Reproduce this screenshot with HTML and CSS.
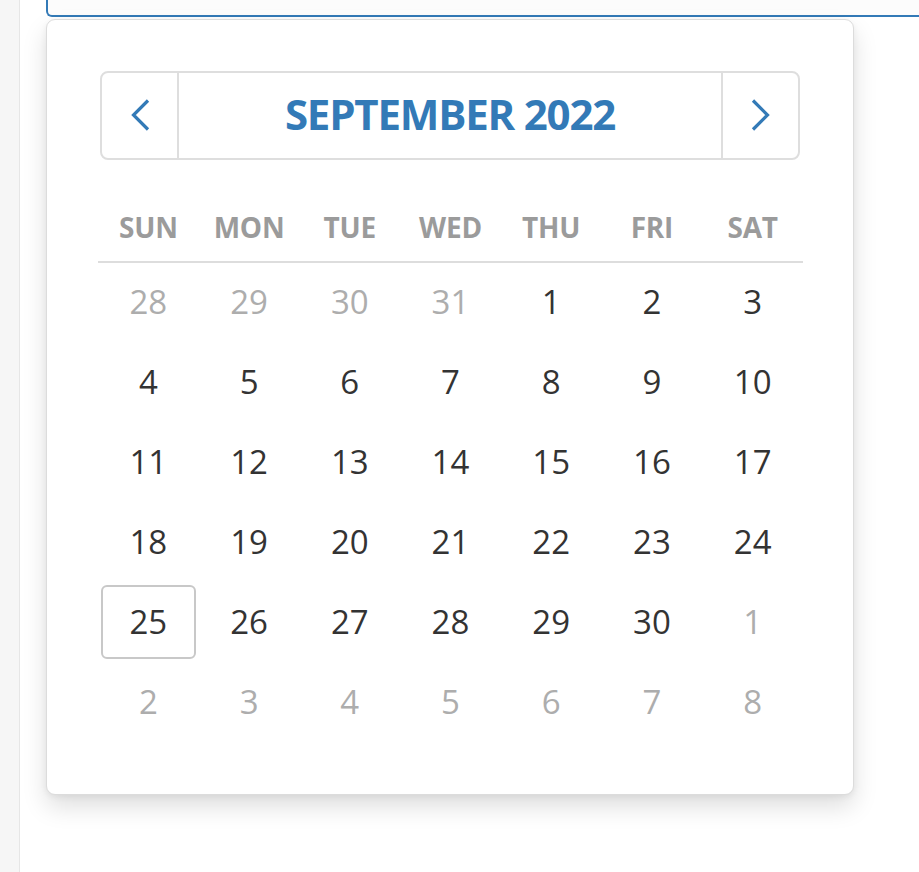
FILE: index.html
```html
<!DOCTYPE html>
<html lang="en">
<head>
<meta charset="utf-8">
<title>Date picker</title>
<link rel="stylesheet" href="styles.css">
</head>
<body>
<div class="page">
  <aside class="sidebar"></aside>
  <main class="main">
    <div class="field"></div>
    <div class="picker">
      <div class="picker-head">
        <button class="nav nav-prev" aria-label="Previous month">
          <svg width="20" height="32" viewBox="0 0 20 32"><path d="M18 1.5 L3.5 16 L18 30.5" fill="none" stroke="#337ab7" stroke-width="3.2"/></svg>
        </button>
        <div class="title">SEPTEMBER 2022</div>
        <button class="nav nav-next" aria-label="Next month">
          <svg width="20" height="32" viewBox="0 0 20 32"><path d="M2 1.5 L16.5 16 L2 30.5" fill="none" stroke="#337ab7" stroke-width="3.2"/></svg>
        </button>
      </div>
      <div class="grid">
        <div class="wd">SUN</div><div class="wd">MON</div><div class="wd">TUE</div><div class="wd">WED</div><div class="wd">THU</div><div class="wd">FRI</div><div class="wd">SAT</div>
        <div class="sep"></div>
        <div class="day muted">28</div><div class="day muted">29</div><div class="day muted">30</div><div class="day muted">31</div><div class="day">1</div><div class="day">2</div><div class="day">3</div>
        <div class="day">4</div><div class="day">5</div><div class="day">6</div><div class="day">7</div><div class="day">8</div><div class="day">9</div><div class="day">10</div>
        <div class="day">11</div><div class="day">12</div><div class="day">13</div><div class="day">14</div><div class="day">15</div><div class="day">16</div><div class="day">17</div>
        <div class="day">18</div><div class="day">19</div><div class="day">20</div><div class="day">21</div><div class="day">22</div><div class="day">23</div><div class="day">24</div>
        <div class="day"><span class="today">25</span></div><div class="day">26</div><div class="day">27</div><div class="day">28</div><div class="day">29</div><div class="day">30</div><div class="day muted">1</div>
        <div class="day muted">2</div><div class="day muted">3</div><div class="day muted">4</div><div class="day muted">5</div><div class="day muted">6</div><div class="day muted">7</div><div class="day muted">8</div>
      </div>
    </div>
  </main>
</div>
</body>
</html>
```

FILE: styles.css
```css
html, body {
  margin: 0;
  padding: 0;
  background: #ffffff;
  overflow: hidden;
}

body {
  font-family: "Open Sans", "Noto Sans", "Liberation Sans", sans-serif;
  color: #333333;
}

.page {
  display: flex;
  height: 872px;
}

.sidebar {
  width: 19px;
  flex: 0 0 19px;
  background: #f6f6f6;
  border-right: 1px solid #e6e6e6;
}

.main {
  flex: 1;
  padding-left: 26px;
  min-width: 0;
}

.field {
  height: 46px;
  margin-top: -29px;
  box-sizing: border-box;
  border: 2px solid #337ab7;
  border-right: none;
  border-radius: 6px 0 0 6px;
  background: #fcfcfc;
}

.picker {
  box-sizing: border-box;
  width: 808px;
  height: 776px;
  margin-top: 2px;
  border: 1px solid #dcdcdc;
  border-radius: 9px;
  background: #ffffff;
  box-shadow: 0 12px 24px rgba(0, 0, 0, 0.13), 0 2px 6px rgba(0, 0, 0, 0.06);
  padding: 51px 0 0 53px;
}

.picker-head {
  box-sizing: border-box;
  width: 700px;
  height: 89px;
  display: flex;
  border: 2px solid #dedede;
  border-radius: 8px;
}

.nav {
  flex: 0 0 77px;
  margin: 0;
  padding: 0 0 1px 0;
  border: none;
  background: transparent;
  display: flex;
  align-items: center;
  justify-content: center;
}

.nav-prev {
  border-right: 2px solid #dedede;
}

.nav-next {
  border-left: 2px solid #dedede;
}

.title {
  flex: 1;
  display: flex;
  align-items: center;
  justify-content: center;
  padding-bottom: 4px;
  font-size: 42px;
  font-weight: 700;
  color: #337ab7;
  letter-spacing: -1.2px;
}

.grid {
  width: 705px;
  margin: 38px 0 0 -2px;
  display: grid;
  grid-template-columns: repeat(7, 1fr);
}

.wd {
  box-sizing: border-box;
  height: 63px;
  padding-bottom: 6px;
  display: flex;
  align-items: center;
  justify-content: center;
  font-size: 28px;
  font-weight: 700;
  color: #9b9b9b;
  letter-spacing: -0.2px;
}

.sep {
  grid-column: 1 / -1;
  height: 2px;
  background: #dddddd;
}

.day {
  box-sizing: border-box;
  height: 80px;
  padding-bottom: 3px;
  display: flex;
  align-items: center;
  justify-content: center;
  font-size: 33px;
  color: #333333;
}

.day.muted {
  color: #adadad;
}

.today {
  box-sizing: border-box;
  width: 95px;
  height: 74px;
  display: flex;
  align-items: center;
  justify-content: center;
  border: 2px solid #c8c8c8;
  border-radius: 6px;
}
```
